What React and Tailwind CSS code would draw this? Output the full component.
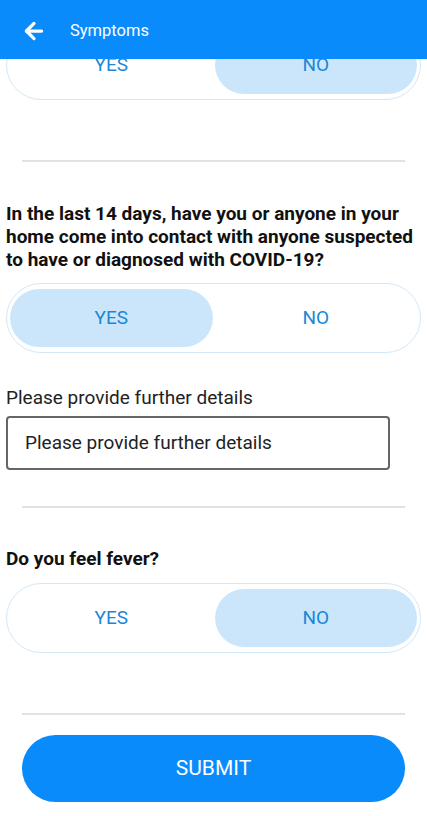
import React from "react";
import { ArrowLeft } from "lucide-react";

const Toggle = ({ value }) => (
    <div className="mx-[6px] h-[70px] rounded-full border border-[#d3e8f7] bg-white px-[3px] py-[5px] grid grid-cols-2 gap-[2px]">
        <div className={`rounded-full flex items-center justify-center text-[19px] text-[#1b87d6] ${value === "yes" ? "bg-[#cbe6fb]" : ""}`}>
            YES
        </div>
        <div className={`rounded-full flex items-center justify-center text-[19px] text-[#1b87d6] ${value === "no" ? "bg-[#cbe6fb]" : ""}`}>
            NO
        </div>
    </div>
);

const Divider = ({ className }) => (
    <div className={`mx-[22px] h-[2px] bg-[#e2e2e2] ${className}`} />
);

export default function App() {
    return (
        <div className="relative w-[427px] h-[816px] overflow-hidden bg-white font-['Roboto',sans-serif]">
            {/* app bar sits over the scrolled content */}
            <div className="absolute top-0 left-0 right-0 z-10 h-[59px] bg-[#0a8bfb] flex items-center pt-[3px]">
                <ArrowLeft className="ml-[21px] text-white" size={26} strokeWidth={3} />
                <span className="ml-[23px] text-[16.5px] text-white">Symptoms</span>
            </div>

            <div className="pt-[30px]">
                <Toggle value="no" />

                <Divider className="mt-[60px]" />

                <p className="mt-[40px] px-[6px] text-[19px] leading-[23px] font-bold text-[#111]">
                    In the last 14 days, have you or anyone in your home come into contact with anyone suspected to have or diagnosed with COVID-19?
                </p>

                <div className="mt-[12px]">
                    <Toggle value="yes" />
                </div>

                <p className="mt-[33px] px-[6px] text-[19px] leading-[23px] text-[#222]">
                    Please provide further details
                </p>
                <div className="mt-[7px] ml-[6px] w-[384px] h-[54px] rounded-[4px] border-2 border-[#666] flex items-center px-[17px] text-[19px] text-[#222]">
                    Please provide further details
                </div>

                <Divider className="mt-[36px]" />

                <p className="mt-[39px] px-[6px] text-[19px] leading-[23px] font-bold text-[#111]">
                    Do you feel fever?
                </p>

                <div className="mt-[13px]">
                    <Toggle value="no" />
                </div>

                <Divider className="mt-[60px]" />

                <button className="mt-[20px] mx-[22px] w-[383px] h-[67px] rounded-full bg-[#0a8bfb] text-white text-[21px] flex items-center justify-center">
                    SUBMIT
                </button>
            </div>
        </div>
    );
}
